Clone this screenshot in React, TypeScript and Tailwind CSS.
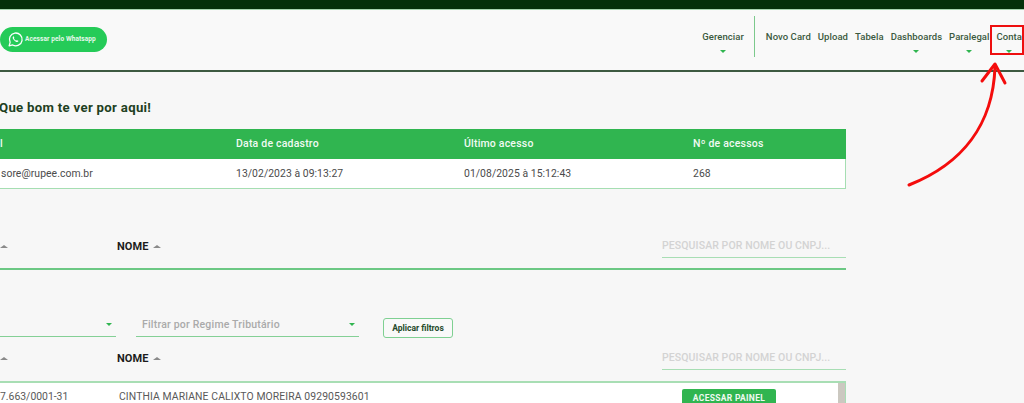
import { ReactNode } from 'react';

const din = "font-['Roboto',sans-serif]";

function Caret({ className }: { className: string }) {
  return <span className={`block w-0 h-0 border-x-[3.5px] border-x-transparent border-t-[3.5px] border-t-[#30b550] ${className}`} />;
}

function SortCaret() {
  return <span className="block w-0 h-0 border-x-[4px] border-x-transparent border-b-[3px] border-b-[#8a8a8a]" />;
}

function NavItem({ label, caret, children }: { label: string; caret?: boolean; children?: ReactNode }) {
  return (
    <div className="flex flex-col items-center">
      <span className="text-[9.5px] font-medium tracking-[0.06px] leading-[14px] text-[#3b5a40] whitespace-nowrap">{label}</span>
      {caret && <Caret className="mt-[6px]" />}
      {children}
    </div>
  );
}

function WhatsappIcon() {
  return (
    <svg viewBox="0 0 24 24" className="w-[17px] h-[17px]" fill="none" stroke="#fff" strokeWidth="1.8">
      <path d="M3 21l1.4-5A9 9 0 1 1 8 19.7L3 21z" strokeLinejoin="round" />
      <path d="M8.8 7.6c-.9.7-1 2-.3 3.5 1 2 2.5 3.5 4.6 4.3 1.3.5 2.5.2 3-.8.2-.4.1-.7-.2-.9l-1.7-.8c-.3-.1-.5 0-.7.2l-.5.6c-1.5-.5-2.6-1.6-3.3-3l.5-.6c.2-.2.2-.4.1-.7l-.7-1.7c-.2-.3-.5-.4-.8-.1z" fill="#fff" stroke="none" />
    </svg>
  );
}

function SortRow({ top }: { top: string }) {
  return (
    <div className={`flex items-start w-[846px] ${top}`}>
      <div className="w-[117px] h-[16px] flex items-center"><SortCaret /></div>
      <div className="flex items-center gap-[4px] w-[545px]">
        <span className="text-[11px] font-bold tracking-[0.1px] leading-[16px] pt-[1px] text-[#1c1c1c]">NOME</span>
        <SortCaret />
      </div>
      <div className="w-[184px] h-[20px] border-b-[1.5px] border-b-[#a8deb4]">
        <span className="text-[10.5px] font-medium tracking-[0.1px] leading-[15px] text-[#d3d3d3] whitespace-nowrap block">PESQUISAR POR NOME OU CNPJ...</span>
      </div>
    </div>
  );
}

export default function App() {
  return (
    <div className={`w-[1024px] h-[403px] overflow-hidden relative bg-[#f7f7f7] ${din}`}>
      <div className="h-[10px] bg-[#04310a] border-b border-b-[#a5d4ae]" />

      <header className="h-[62px] bg-[#f9f9f9] border-b-2 border-b-[#3d5a41] flex items-start justify-between">
        <button className="mt-[17px] h-[25px] w-[107px] rounded-full bg-[#25cb58] flex items-center pl-[7px] gap-[1px]">
          <WhatsappIcon />
          <span className="text-[6.5px] font-bold tracking-[0.1px] text-[#e8f8ec] whitespace-nowrap">Acessar pelo Whatsapp</span>
        </button>
        <nav className="flex items-start mt-[6px] pr-[2px]">
          <div className="pt-[14px] pr-[10px] h-[41px] border-r border-r-[#7cc98c]">
            <NavItem label="Gerenciar" caret />
          </div>
          <div className="flex items-start gap-[7px] pl-[11px] pt-[14px]">
            <NavItem label="Novo Card" />
            <NavItem label="Upload" />
            <NavItem label="Tabela" />
            <NavItem label="Dashboards" caret />
            <NavItem label="Paralegal" caret />
            <NavItem label="Conta" caret />
          </div>
        </nav>
      </header>

      <main>
        <h1 className="mt-[28px] text-[13.2px] font-bold leading-[16px] tracking-[0.3px] text-[#1e3f22] -ml-[1px]">Que bom te ver por aqui!</h1>

        <section className="mt-[13px] w-[847px] -ml-[1px]">
          <div className="h-[30px] bg-[#30b550] grid grid-cols-[237px_228px_229px_1fr] items-center text-[10.5px] font-medium tracking-[0.2px] text-[#f1faf3]">
            <span className="pl-[1px]">l</span>
            <span>Data de cadastro</span>
            <span>Último acesso</span>
            <span>Nº de acessos</span>
          </div>
          <div className="h-[30px] bg-white border-b border-r border-[#a5deb2] grid grid-cols-[237px_228px_229px_1fr] items-center text-[10.4px] tracking-[0.05px] text-[#4b4b4b]">
            <span className="pl-[2px]">sore@rupee.com.br</span>
            <span>13/02/2023 à 09:13:27</span>
            <span>01/08/2025 à 15:12:43</span>
            <span>268</span>
          </div>
        </section>

        <SortRow top="mt-[49px]" />
        <div className="w-[846px] mt-[10px] border-b-2 border-b-[#6cc884]" />

        <section className="mt-[48px] flex items-start w-[846px]">
          <div className="w-[116px] h-[19px] border-b border-b-[#84d096] flex justify-end pr-[4px] pt-[5px]">
            <Caret className="" />
          </div>
          <div className="ml-[20px] w-[223px] h-[19px] border-b border-b-[#84d096] flex items-start justify-between pl-[6px] pr-[4px]">
            <span className="text-[10.5px] font-medium tracking-[0.2px] leading-[14px] text-[#aaaaaa]">Filtrar por Regime Tributário</span>
            <Caret className="mt-[5px]" />
          </div>
          <button className="ml-[24px] w-[70px] h-[20px] rounded-[3px] border border-[#7fd092] bg-[#f9f9f9] text-[8.5px] font-bold text-[#23492a]">Aplicar filtros</button>
        </section>

        <SortRow top="mt-[12px]" />

        <section className="mt-[11px] w-[846px] h-[40px] bg-white border-t-2 border-r border-[#a8deb4] flex items-start relative">
          <span className="w-[119px] pt-[7px] text-[10.4px] leading-[14px] text-[#595959]">7.663/0001-31</span>
          <span className="w-[563px] pt-[7px] text-[10.4px] leading-[14px] tracking-[0.1px] text-[#595959] whitespace-nowrap">CINTHIA MARIANE CALIXTO MOREIRA 09290593601</span>
          <button className="mt-[6px] w-[94px] h-[24px] rounded-[2px] bg-[#30b550] text-[8.5px] font-bold tracking-[0.3px] text-[#eef9f0] pb-[6px]">ACESSAR PAINEL</button>
          <span className="absolute right-0 top-0 w-[7px] h-full bg-[#cbc8c0]" />
        </section>
      </main>

      {/* anotação vermelha por cima da tela */}
      <div className="absolute left-[990px] top-[25px] w-[34px] h-[30px] border-[2.5px] border-[#ee0f0f]" />
      <svg className="absolute left-0 top-0 pointer-events-none" width="1024" height="403" fill="none" stroke="#f40c0c" strokeLinecap="round" strokeLinejoin="round">
        <path d="M909 185C962 164 993 125 995 67" strokeWidth="3" />
        <path d="M982 81L995 64L1005 83" strokeWidth="3" />
      </svg>
    </div>
  );
}
